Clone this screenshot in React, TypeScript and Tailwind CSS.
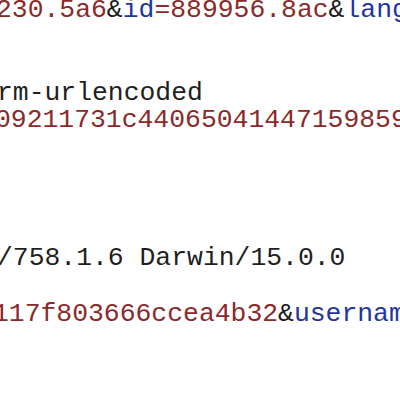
const Red = ({ children }: { children: string }) => <span className="text-[#8a2a2a]">{children}</span>;
const Blue = ({ children }: { children: string }) => <span className="text-[#22349e]">{children}</span>;
const Amp = () => <span className="text-[#1a1a1a]">&amp;</span>;

export default function App() {
    return (
        <div className="w-[400px] h-[400px] overflow-hidden bg-white">
            <div className="-mt-[3px] font-['Liberation_Mono','Courier_New',monospace] text-[26.4px] leading-[27.6px] text-[#1f1f1f] whitespace-pre">
                <div className="-ml-[4px]">
                    <Red>230.5a6</Red><Amp /><Blue>id</Blue><Red>=889956.8ac</Red><Amp /><Blue>lang</Blue>
                </div>
                <div>&nbsp;</div>
                <div>&nbsp;</div>
                <div className="-ml-[3px]">rm-urlencoded</div>
                <div className="-ml-[5px]">
                    <Red>09211731c44065041447159859a</Red>
                </div>
                <div>&nbsp;</div>
                <div>&nbsp;</div>
                <div>&nbsp;</div>
                <div>&nbsp;</div>
                <div className="-ml-[3px]">/758.1.6 Darwin/15.0.0</div>
                <div>&nbsp;</div>
                <div className="-ml-[7px]">
                    <Red>117f803666ccea4b32</Red><Amp /><Blue>username</Blue>
                </div>
            </div>
        </div>
    );
}
